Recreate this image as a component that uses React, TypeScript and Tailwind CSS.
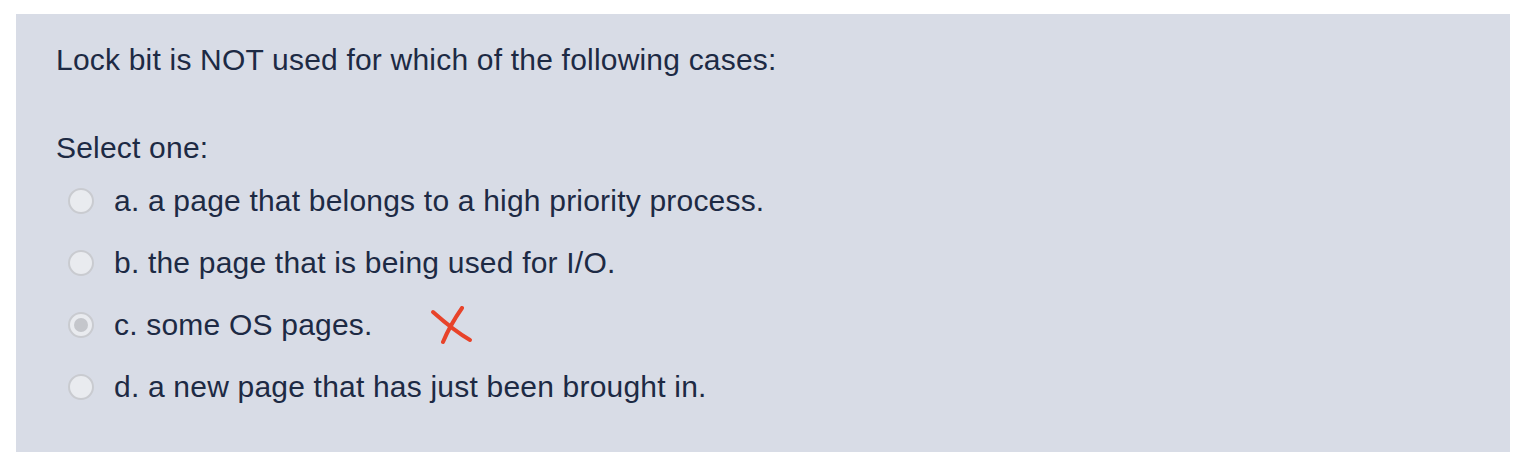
import React from 'react';

interface Option {
  key: string;
  text: string;
  selected?: boolean;
  wrong?: boolean;
}

const options: Option[] = [
  { key: 'a', text: 'a. a page that belongs to a high priority process.' },
  { key: 'b', text: 'b. the page that is being used for I/O.' },
  { key: 'c', text: 'c. some OS pages.', selected: true, wrong: true },
  { key: 'd', text: 'd. a new page that has just been brought in.' },
];

const Radio: React.FC<{ checked?: boolean }> = ({ checked }) => (
  <span className="flex h-[26px] w-[26px] shrink-0 items-center justify-center rounded-full border-2 border-[#c9cbd0] bg-[#e9ebef]">
    {checked && <span className="h-[14px] w-[14px] rounded-full bg-[#c4c6cb]" />}
  </span>
);

const WrongMark = () => (
  <svg width="44" height="38" viewBox="0 0 44 38" className="ml-[57px]" fill="none">
    <path d="M3 6 C12 14 26 26 40 34" stroke="#e8432a" strokeWidth="4" strokeLinecap="round" />
    <path d="M32 2 C25 12 18 24 13 36" stroke="#e8432a" strokeWidth="4" strokeLinecap="round" />
  </svg>
);

export default function App() {
  return (
    <div className="bg-white pt-[14px] pl-[16px] pr-[20px] h-[470px] font-['Liberation_Sans',Arial,sans-serif] text-[#1d2a44]">
      <div className="h-[438px] bg-[#d8dce6] pl-[40px] pt-[28px]">
        <p className="text-[30px] leading-[36px] tracking-[0.2px]">Lock bit is NOT used for which of the following cases:</p>
        <p className="mt-[52px] text-[30px] leading-[36px] tracking-[0.2px]">Select one:</p>
        <div className="mt-[17px] flex flex-col gap-[26px] pl-[12px]">
          {options.map((o) => (
            <div key={o.key} className="flex h-[36px] items-center">
              <Radio checked={o.selected} />
              <span className="ml-[20px] text-[30px] leading-[36px] tracking-[0.2px]">{o.text}</span>
              {o.wrong && <WrongMark />}
            </div>
          ))}
        </div>
      </div>
    </div>
  );
}
